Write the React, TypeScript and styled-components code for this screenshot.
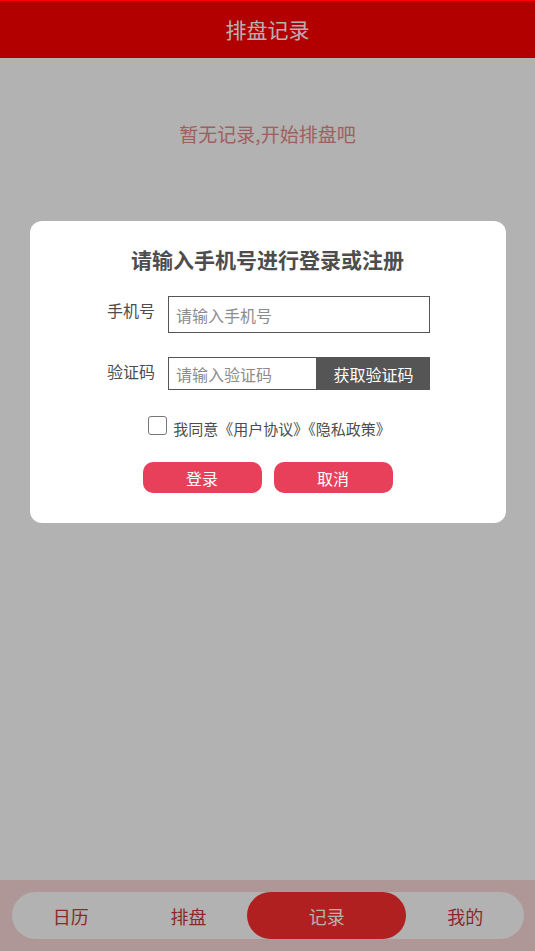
import React, { useState } from 'react'
import styled, { createGlobalStyle } from 'styled-components'

const GlobalStyle = createGlobalStyle`
    html, body {
        margin: 0;
        padding: 0;
        background: #fff;
        font-family: "Noto Sans CJK SC", "Noto Sans", sans-serif;
    }
    * { box-sizing: border-box; }
`

const SPage = styled.div`
    height: 951px;
    display: flex;
    flex-direction: column;
`
const SHeader = styled.div`
    height: 58px;
    flex-shrink: 0;
    background: #ff0000;
    color: #fff;
    font-size: 21px;
    display: flex;
    align-items: center;
    justify-content: center;
`
const SEmpty = styled.div`
    flex: 1;
    padding-top: 62px;
    text-align: center;
    font-size: 19px;
    color: #e58989;
`
const STabBar = styled.div`
    height: 71px;
    flex-shrink: 0;
    background: #fbd9d9;
    padding: 12px 11px 12px 12px;
`
const STabs = styled.div`
    height: 47px;
    background: #fff;
    border-radius: 24px;
    display: flex;
`
const STab = styled.div<{ $active?: boolean }>`
    flex: ${p => (p.$active ? '0 0 159px' : '1')};
    display: flex;
    align-items: center;
    justify-content: center;
    font-size: 18px;
    border-radius: 24px;
    color: ${p => (p.$active ? '#fff' : '#c73c3c')};
    background: ${p => (p.$active ? '#fe2e2e' : 'transparent')};
`
const SMask = styled.div`
    position: fixed;
    top: 1px;
    left: 0;
    right: 0;
    bottom: 0;
    background: rgba(0, 0, 0, 0.3);
    display: flex;
    justify-content: center;
    align-items: flex-start;
    padding-top: 220px;
`
const SDialog = styled.div`
    width: 476px;
    height: 302px;
    background: #fff;
    border-radius: 12px;
    padding-top: 22px;
    display: flex;
    flex-direction: column;
    align-items: center;
`
const STitle = styled.div`
    font-size: 21px;
    font-weight: 700;
    color: #4d4d4d;
    line-height: 32px;
`
const SRow = styled.div<{ $mt: number }>`
    display: flex;
    align-items: flex-start;
    width: 323px;
    margin-left: 2px;
    margin-top: ${p => p.$mt}px;
`
const SLabel = styled.div`
    width: 61px;
    font-size: 16px;
    color: #4d4d4d;
    line-height: 28px;
`
const SInput = styled.input<{ $h: number }>`
    flex: 1;
    min-width: 0;
    height: ${p => p.$h}px;
    border: 1px solid #555;
    border-radius: 0;
    padding: 0 7px;
    font-size: 16px;
    font-family: inherit;
    color: #333;
    outline: none;
    &::placeholder { color: #8c8c8c; }
`
const SCodeBtn = styled.button`
    width: 113px;
    height: 33px;
    flex-shrink: 0;
    border: none;
    background: #555;
    color: #fff;
    font-size: 16px;
    font-family: inherit;
    padding: 0;
`
const SAgree = styled.label`
    display: flex;
    align-items: center;
    margin-top: 28px;
    font-size: 15px;
    color: #4d4d4d;
    margin-left: 4px;
`
const SCheck = styled.span<{ $on: boolean }>`
    width: 19px;
    height: 19px;
    border: 1.5px solid #777;
    border-radius: 3px;
    margin-right: 6px;
    margin-top: -6px;
    background: ${p => (p.$on ? '#e8405a' : '#fff')};
`
const SBtns = styled.div`
    display: flex;
    gap: 12px;
    margin-top: 23px;
`
const SBtn = styled.button`
    width: 119px;
    height: 31px;
    border: none;
    border-radius: 10px;
    background: #e8405a;
    color: #fff;
    font-size: 16px;
    font-family: inherit;
    padding: 0;
`

const App = () => {
    const [agree, setAgree] = useState(false)
    const tabs = ['日历', '排盘', '记录', '我的']

    return (
        <>
            <GlobalStyle />
            <SPage>
                <SHeader>排盘记录</SHeader>
                <SEmpty>暂无记录,开始排盘吧</SEmpty>
                <STabBar>
                    <STabs>
                        {tabs.map(t => (
                            <STab key={t} $active={t === '记录'}>{t}</STab>
                        ))}
                    </STabs>
                </STabBar>
            </SPage>
            <SMask>
                <SDialog>
                    <STitle>请输入手机号进行登录或注册</STitle>
                    <SRow $mt={21}>
                        <SLabel>手机号</SLabel>
                        <SInput $h={37} placeholder='请输入手机号' />
                    </SRow>
                    <SRow $mt={24}>
                        <SLabel>验证码</SLabel>
                        <SInput $h={33} placeholder='请输入验证码' />
                        <SCodeBtn>获取验证码</SCodeBtn>
                    </SRow>
                    <SAgree onClick={() => setAgree(!agree)}>
                        <SCheck $on={agree} />
                        我同意《用户协议》《隐私政策》
                    </SAgree>
                    <SBtns>
                        <SBtn>登录</SBtn>
                        <SBtn>取消</SBtn>
                    </SBtns>
                </SDialog>
            </SMask>
        </>
    )
}

export default App
